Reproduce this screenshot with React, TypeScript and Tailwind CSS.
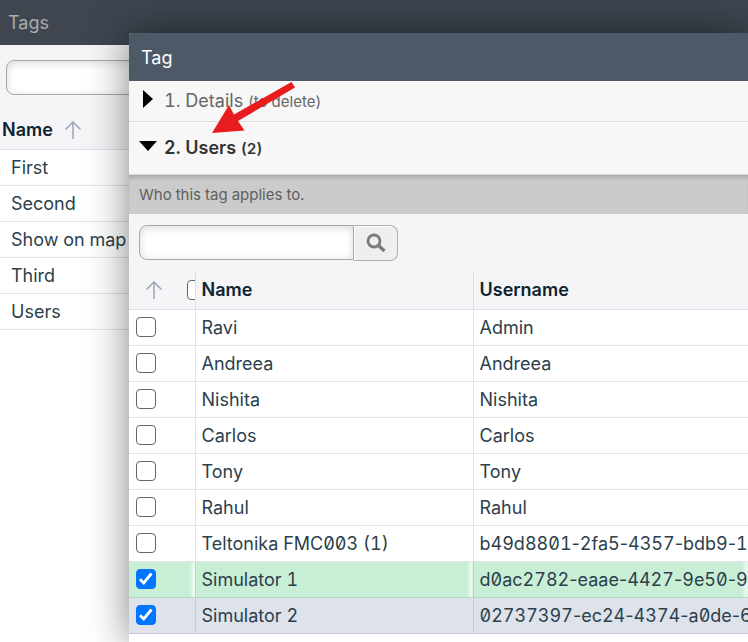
import React from "react";

const tags = ["First", "Second", "Show on map", "Third", "Users"];

type User = { name: string; username: string; state?: "added" | "selected" };

const users: User[] = [
  { name: "Ravi", username: "Admin" },
  { name: "Andreea", username: "Andreea" },
  { name: "Nishita", username: "Nishita" },
  { name: "Carlos", username: "Carlos" },
  { name: "Tony", username: "Tony" },
  { name: "Rahul", username: "Rahul" },
  { name: "Teltonika FMC003 (1)", username: "b49d8801-2fa5-4357-bdb9-1" },
  { name: "Simulator 1", username: "d0ac2782-eaae-4427-9e50-9", state: "added" },
  { name: "Simulator 2", username: "02737397-ec24-4374-a0de-6", state: "selected" },
];

function SortArrow() {
  return (
    <svg className="shrink-0" width="18" height="18" viewBox="0 0 18 18" fill="none" stroke="#9aa5b8" strokeWidth="1.5" aria-hidden="true">
      <path d="M9 18V1M1.5 8.5 9 1l7.500 7.500" />
    </svg>
  );
}

function Checkbox({ label, checked = false }: { label: string; checked?: boolean }) {
  return (
    <span className="relative block size-5 shrink-0">
      <input
        type="checkbox"
        aria-label={label}
        defaultChecked={checked}
        className="peer block size-5 appearance-none rounded-[4px] border border-[#666] bg-white checked:border-[#0075ff] checked:bg-[#0075ff]"
      />
      <svg
        viewBox="0 0 20 20"
        className="pointer-events-none absolute inset-0 hidden size-5 peer-checked:block"
        fill="none"
        stroke="#fff"
        strokeWidth="2.800"
        aria-hidden="true"
      >
        <path d="M4 10.300 7.700 14 15.500 4.500" />
      </svg>
    </span>
  );
}

// Digits are tabular; hyphens keep their narrower proportional width.
function Username({ value }: { value: string }) {
  return value.split("-").map((part, i) => (
    <React.Fragment key={i}>
      {i > 0 && <span className="normal-nums">-</span>}
      {part}
    </React.Fragment>
  ));
}

function UserRow({ user }: { user: User }) {
  const row =
    user.state === "added"
      ? "border-[#b5d8c3]"
      : user.state === "selected"
        ? "border-[#c5cad6] bg-[#dee2eb]"
        : "border-[#e2e3e6]";
  const fill =
    user.state === "added" ? "bg-[linear-gradient(to_right,#c8eed5_calc(100%_-_6px),#f4fcf6)]" : "";
  return (
    <tr className={`h-9 border-b ${row}`}>
      <td className={`pl-[7px] ${fill}`}>
        <Checkbox label={user.name} checked={user.state !== undefined} />
      </td>
      <td className={`border-l border-inherit pt-px pl-[6px] whitespace-nowrap ${fill}`}>{user.name}</td>
      <td className={`border-l border-inherit pt-px pl-[6px] whitespace-nowrap ${fill}`}>
        <Username value={user.username} />
      </td>
    </tr>
  );
}

function TagsPage() {
  return (
    <main>
      <header className="flex h-[45px] items-center bg-[#3f4650] px-2 text-lg text-[#a9abae]">
        <h1>Tags</h1>
      </header>
      <div className="bg-[#f5f5f8] px-[6px] pt-[15px] pb-4">
        <input
          type="search"
          aria-label="Search tags"
          className="block h-[35px] w-full max-w-[260px] rounded-lg border border-[#a8a8a8] bg-white px-3 shadow-[inset_0_2px_8px_rgba(0,0,0,0.15)]"
        />
      </div>
      <table className="w-full border-collapse text-left">
        <thead className="bg-[#f5f5f8]">
          <tr className="h-[38px] border-b border-[#dddfe8]">
            <th className="pl-[2px] font-semibold text-[#0d2430]">
              <span className="flex items-center gap-[11px]">
                Name <SortArrow />
              </span>
            </th>
          </tr>
        </thead>
        <tbody>
          {tags.map((tag) => (
            <tr key={tag} className="h-9 border-b border-[#e2e3e6]">
              <td className="pt-px pl-[11px]">{tag}</td>
            </tr>
          ))}
        </tbody>
      </table>
    </main>
  );
}

function TagDialog() {
  return (
    <section
      role="dialog"
      aria-label="Tag"
      className="absolute top-[33px] right-0 bottom-0 left-[129px] flex flex-col overflow-x-clip rounded-tl-[3px] bg-white shadow-[0_0_40px_rgba(0,0,0,0.5)]"
    >
      <header className="flex h-12 shrink-0 items-center rounded-tl-[3px] bg-[#4d5966] px-3 pt-[2px] text-lg text-white">
        <h2>Tag</h2>
      </header>

      <button type="button" className="flex h-[41px] shrink-0 items-center border-b border-[#dedede] bg-[#f7f7f7] pr-3 pl-[14px] text-left text-[#666]">
        <svg width="10" height="18" viewBox="0 0 10 18" className="mr-[11px] mb-1" aria-hidden="true">
          <path d="M0 0 10 9 0 18Z" fill="#000" />
        </svg>
        <span>
          1. Details <small className="text-[15px]">(to delete)</small>
        </span>
      </button>
      <button type="button" className="flex h-[53px] shrink-0 items-center border-b border-[#d8d8d8] bg-[#f7f7f7] pr-3 pl-[10px] text-left font-semibold text-[#333]">
        <svg width="18" height="10" viewBox="0 0 18 10" className="mr-[7px] mb-1" aria-hidden="true">
          <path d="M0 0H18L9 10Z" fill="#000" />
        </svg>
        <span>
          2. Users <small className="text-[15px]">(2)</small>
        </span>
      </button>
      <p className="flex h-[39px] shrink-0 items-center bg-[#cbcbcb] px-[10px] text-[15px] text-[#606060] shadow-[inset_0_5px_5px_-3px_rgba(0,0,0,0.22)]">
        Who this tag applies to.
      </p>

      <form className="flex bg-[#f5f5f8] px-[10px] pt-[11px] pb-[10px]" onSubmit={(e) => e.preventDefault()}>
        <input
          type="search"
          aria-label="Search users"
          className="h-[35px] w-[215px] rounded-l-lg border border-[#a8a8a8] bg-white px-3 shadow-[inset_0_2px_8px_rgba(0,0,0,0.15)]"
        />
        <button
          type="submit"
          aria-label="Search"
          className="flex h-9 w-11 items-center justify-center rounded-r-lg border border-l-0 border-[#b0b0b0] bg-[#efefef] shadow-[inset_1px_1px_0_#fff]"
        >
          <svg width="20" height="20" viewBox="0 0 20 20" fill="none" stroke="#7b7b7b" aria-hidden="true">
            <circle cx="8" cy="8" r="6" strokeWidth="2.800" />
            <path d="M12.500 12.500 18.500 18" strokeWidth="3.500" />
          </svg>
        </button>
      </form>

      <table className="w-full table-fixed border-collapse text-left">
        <colgroup>
          <col className="w-[66px]" />
          <col className="w-[278px]" />
          <col />
        </colgroup>
        <thead className="bg-[#f5f5f8] text-[#0d2430]">
          <tr className="h-[38px] border-b border-[#dddfe8]">
            <th className="pl-4">
              <span className="flex items-center gap-6 overflow-hidden">
                <SortArrow />
                <Checkbox label="Select all users" />
              </span>
            </th>
            <th className="border-l border-[#dddfe8] pl-[6px] font-semibold">Name</th>
            <th className="border-l border-[#dddfe8] pl-[6px] font-semibold">Username</th>
          </tr>
        </thead>
        <tbody>
          {users.map((user) => (
            <UserRow key={user.name} user={user} />
          ))}
        </tbody>
      </table>
    </section>
  );
}

export default function App() {
  return (
    <div className="relative min-h-screen overflow-hidden bg-white font-['Inter','Liberation_Sans',sans-serif] text-lg leading-6 text-[#2c3f4b] tabular-nums slashed-zero">
      <TagsPage />
      <TagDialog />
      <svg className="pointer-events-none absolute top-[80px] left-[210px]" width="90" height="56" viewBox="210 80 90 56" aria-hidden="true">
        <path d="M212 133 229 105 234 114.500 291.500 82 295 87.500 238 121 244.500 130.500Z" fill="#e81c1c" />
      </svg>
    </div>
  );
}
